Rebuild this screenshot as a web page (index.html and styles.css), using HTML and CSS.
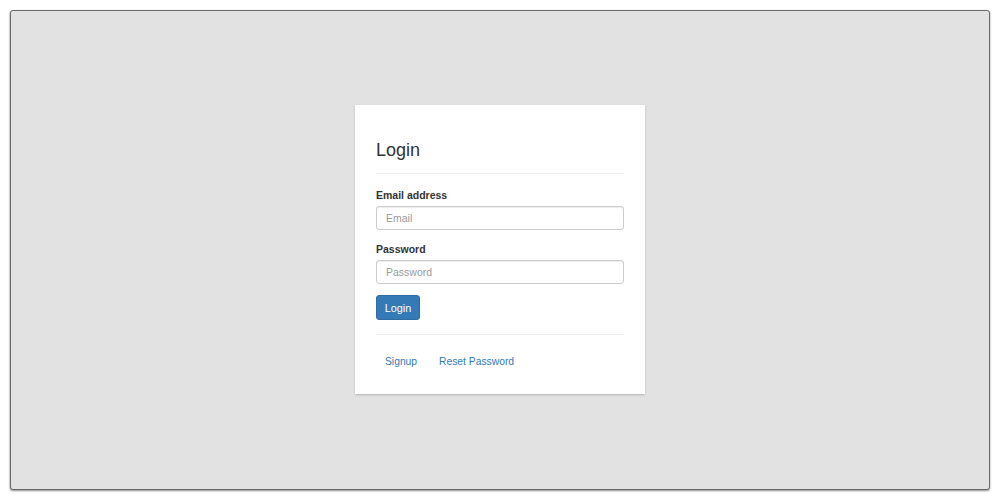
FILE: index.html
```html
<!DOCTYPE html>
<html lang="en">
<head>
<meta charset="utf-8">
<title>Login</title>
<link rel="stylesheet" href="styles.css">
</head>
<body>
<div class="frame">
  <div class="card">
    <h2 class="title">Login</h2>
    <hr class="rule">
    <form class="form">
      <label class="label" for="email">Email address</label>
      <input class="input" id="email" type="email" placeholder="Email">
      <label class="label label-gap" for="password">Password</label>
      <input class="input" id="password" type="password" placeholder="Password">
      <button class="btn" type="button">Login</button>
    </form>
    <hr class="rule rule-bottom">
    <nav class="links">
      <a class="link" href="#">Signup</a>
      <a class="link" href="#">Reset Password</a>
    </nav>
  </div>
</div>
</body>
</html>
```

FILE: styles.css
```css
html, body {
  margin: 0;
  padding: 0;
  background: #ffffff;
}
body {
  padding: 10px;
  font-family: "Liberation Sans", Arial, sans-serif;
  color: #333333;
}
.frame {
  box-sizing: border-box;
  width: 980px;
  height: 480px;
  padding-bottom: 1px;
  background: #e2e2e2;
  border: 1px solid #6a6a6a;
  border-radius: 3px;
  box-shadow: 0 1px 2px rgba(0,0,0,0.45), -1px 0 1px rgba(0,0,0,0.08);
  display: flex;
  align-items: center;
  justify-content: center;
}
.card {
  box-sizing: border-box;
  width: 290px;
  height: 289px;
  background: #ffffff;
  padding: 21px 21px 16px;
  box-shadow: 0 1px 2px rgba(0,0,0,0.2);
  display: flex;
  flex-direction: column;
}
.title {
  margin: 13px 0 0;
  font-size: 18px;
  line-height: 22px;
  font-weight: normal;
  color: #333;
}
.rule {
  margin: 12px 0 0;
  border: 0;
  border-top: 1px solid #eeeeee;
  height: 0;
}
.form {
  display: flex;
  flex-direction: column;
  align-items: flex-start;
  margin: 0;
}
.label {
  margin-top: 13px;
  margin-bottom: 3px;
  font-size: 10.5px;
  line-height: 16px;
  font-weight: bold;
  color: #333;
}
.label-gap {
  margin-top: 11px;
}
.input {
  box-sizing: border-box;
  width: 248px;
  height: 24px;
  margin: 0;
  padding: 0 9px;
  border: 1px solid #cccccc;
  border-radius: 3px;
  font-family: "Liberation Sans", Arial, sans-serif;
  font-size: 10.5px;
  color: #555;
  box-shadow: inset 0 1px 1px rgba(0,0,0,0.07);
}
.input::placeholder {
  color: #999999;
}
.btn {
  box-sizing: border-box;
  margin-top: 11px;
  width: 44px;
  height: 25px;
  padding: 0;
  background: #337ab7;
  border: 1px solid #2e6da4;
  border-radius: 3px;
  color: #ffffff;
  font-family: "Liberation Sans", Arial, sans-serif;
  font-size: 10.8px;
}
.rule-bottom {
  margin-top: 14px;
}
.links {
  display: flex;
  margin-top: 11px;
}
.link {
  padding: 8px 9px;
  font-size: 10.3px;
  line-height: 16px;
  color: #337ab7;
  text-decoration: none;
}
.link + .link {
  margin-left: 4px;
}
```
